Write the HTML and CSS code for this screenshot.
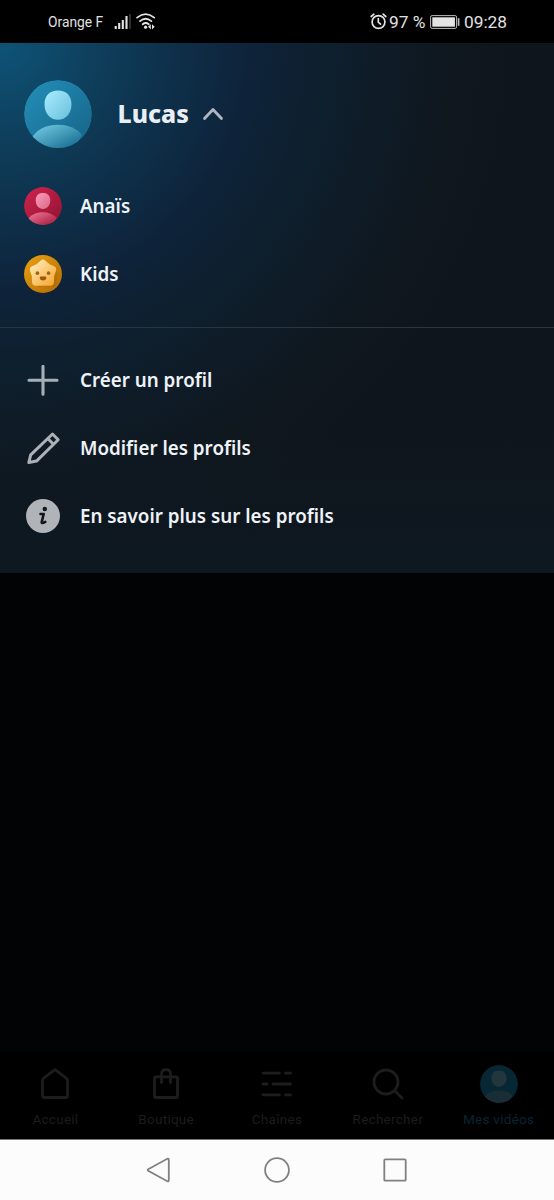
FILE: index.html
```html
<!DOCTYPE html>
<html lang="fr">
<head>
<meta charset="utf-8">
<title>Profils</title>
<link rel="stylesheet" href="styles.css">
</head>
<body>
<svg class="defs" width="0" height="0" aria-hidden="true">
  <defs>
    <linearGradient id="blueBg" x1="0" y1="0" x2="1" y2="1"><stop offset="0" stop-color="#2490ba"/><stop offset="1" stop-color="#166286"/></linearGradient>
    <linearGradient id="blueHead" x1="0" y1="0" x2="1" y2="1"><stop offset="0" stop-color="#a9edff"/><stop offset="1" stop-color="#68bfdb"/></linearGradient>
    <linearGradient id="blueBody" x1="0" y1="0" x2="1" y2="1"><stop offset="0.1" stop-color="#6fc8e2"/><stop offset="0.85" stop-color="#1c7195"/></linearGradient>
    <linearGradient id="redBg" x1="0" y1="0" x2="1" y2="1"><stop offset="0" stop-color="#d0234f"/><stop offset="1" stop-color="#8e1330"/></linearGradient>
    <linearGradient id="redHead" x1="0" y1="0" x2="1" y2="1"><stop offset="0" stop-color="#ff9dbb"/><stop offset="1" stop-color="#d86688"/></linearGradient>
    <linearGradient id="redBody" x1="0" y1="0" x2="1" y2="1"><stop offset="0.1" stop-color="#ee7193"/><stop offset="0.9" stop-color="#a51c3e"/></linearGradient>
    <linearGradient id="kidBg" x1="0" y1="0" x2="1" y2="1"><stop offset="0" stop-color="#eba10f"/><stop offset="1" stop-color="#b06a05"/></linearGradient>
    <linearGradient id="kidStar" gradientUnits="userSpaceOnUse" x1="14" y1="10" x2="54" y2="54"><stop offset="0.1" stop-color="#ffe6b0"/><stop offset="1" stop-color="#f7a62e"/></linearGradient>
    <clipPath id="disc"><circle cx="34" cy="34" r="34"/></clipPath>
  </defs>
</svg>
<div class="screen">
  <header class="status">
    <span class="carrier">Orange F</span>
    <svg class="signal" width="17" height="16" viewBox="0 0 17 16"><path d="M1.700 12v3M5.200 9v6M8.800 6v9M12.500 2v13" stroke="#e4e4e4" stroke-width="2.1"/><path d="M16 0v15" stroke="#333" stroke-width="1.8"/></svg>
    <svg class="wifi" width="20" height="17" viewBox="0 0 20 17" fill="none" stroke="#e4e4e4" stroke-width="1.8" stroke-linecap="round"><path d="M1.1 4.6Q9.6-2.3 18.2 4.6M4 8.1Q9.6 3.4 15.4 8.1M6.7 11.2Q9.7 8.8 12.7 11.2"/><circle cx="9.6" cy="14.2" r="1.6" fill="#e4e4e4" stroke="none"/><path d="M14.8 11.2v5.2l-2.7-2.6zM16 11.2v5.2l2.7-2.6z" fill="#e4e4e4" stroke="none"/></svg>
    <svg class="alarm" width="17" height="17" viewBox="0 0 17 17" fill="none" stroke="#e4e4e4" stroke-width="1.7" stroke-linecap="round"><circle cx="8.5" cy="9" r="6.4"/><path d="M8.3 5.7v3.5l2.2 2M1.2 3.5 3.9 1.2M13.1 1.2l2.7 2.3"/></svg>
    <span class="percent">97 %</span>
    <svg class="battery" width="30" height="14" viewBox="0 0 30 14"><rect x=".6" y=".6" width="26" height="12.8" rx="1.5" fill="none" stroke="#bbb"/><rect x="2.3" y="2.3" width="22.6" height="9.4" fill="#e4e4e4"/><path d="M28.6 3.2v7.6" stroke="#bbb" stroke-width="1.7"/></svg>
    <span class="clock">09:28</span>
  </header>

  <main class="panel">
    <div class="current">
      <svg class="avatar" viewBox="0 0 68 68"><g clip-path="url(#disc)"><circle cx="34" cy="34" r="34" fill="url(#blueBg)"/><path d="M34 10.500c8.200 0 13.500 5 13.500 13.700 0 9-5.800 15.600-13.500 15.600s-13.500-6.600-13.500-15.600c0-8.700 5.300-13.700 13.500-13.700z" fill="url(#blueHead)"/><path d="M5 62C12 49 22 44.700 34 44.700c9.500 0 18.500 3.300 23.800 10L50 70H12z" fill="url(#blueBody)"/></g></svg>
      <span class="current-name">Lucas</span>
      <svg class="chevron" width="22" height="14" viewBox="0 0 22 14"><path d="M2.500 11.500 11 2.500 19.500 11.500" fill="none" stroke="#b0b7c0" stroke-width="2.800" stroke-linecap="round" stroke-linejoin="round"/></svg>
    </div>
    <div class="row">
      <svg class="small-avatar" viewBox="0 0 68 68"><g clip-path="url(#disc)"><circle cx="34" cy="34" r="34" fill="url(#redBg)"/><path d="M34 10.700c8.200 0 13 4.800 13 12.700 0 9.500-5.500 16-13 16s-13-6.500-13-16c0-7.900 4.800-12.700 13-12.700z" fill="url(#redHead)"/><path d="M5 60C12 49 22 45 34 45c9.500 0 18.500 3.500 24.500 10L50 70H12z" fill="url(#redBody)"/></g></svg>
      <span>Anaïs</span>
    </div>
    <div class="row">
      <svg class="small-avatar" viewBox="0 0 68 68"><circle cx="34" cy="34" r="34" fill="url(#kidBg)"/><path d="M48 28 60 28 57 56 24 57z" fill="#a56404" opacity=".4"/><path d="M34 15 42 22 51 26 47.500 37 47 48.500 34 48 21 48.500 20.500 37 17 26 26 22z" fill="url(#kidStar)" stroke="url(#kidStar)" stroke-width="13" stroke-linejoin="round"/><circle cx="24" cy="32.500" r="3.200" fill="#9b651c"/><circle cx="44" cy="32.500" r="3.200" fill="#9b651c"/><path d="M30.500 38.500h7q2.500 0 2.500 2.500-1 4.500-6 4.500T28 41q0-2.500 2.500-2.500z" fill="#9b5710"/></svg>
      <span>Kids</span>
    </div>
    <div class="divider"></div>
    <div class="row">
      <svg class="row-icon" viewBox="0 0 38 38"><path d="M19 5.300v28M5 19.300h28" stroke="#a5afb6" stroke-width="3.100" stroke-linecap="round"/></svg>
      <span>Créer un profil</span>
    </div>
    <div class="row">
      <svg class="row-icon" viewBox="0 0 38 38" fill="none" stroke="#adb1b7" stroke-width="3" stroke-linejoin="round"><path d="M4.800 33.500 6.700 25.800 28.500 5 34.200 10.800 12.500 32.100zM23.800 9.500l5.600 5.700"/></svg>
      <span>Modifier les profils</span>
    </div>
    <div class="row">
      <svg class="row-icon" viewBox="0 0 38 38"><circle cx="19" cy="19" r="17" fill="#b0b3b8"/><circle cx="20.800" cy="12" r="2.200" fill="#10171e"/><path d="M16.500 17h3.200L17.700 25q-.4 2.100 3.600-.2" fill="none" stroke="#10171e" stroke-width="2.600" stroke-linecap="round" stroke-linejoin="round"/></svg>
      <span>En savoir plus sur les profils</span>
    </div>
  </main>

  <div class="backdrop"></div>

  <nav class="tabs">
    <div class="tab">
      <svg class="tab-icon" viewBox="0 0 38 38"><path d="M6.500 15.500Q6.500 14 7.700 13.200L19 4.700l11.300 8.500q1.200.8 1.200 2.300v15q0 2-2 2h-21q-2 0-2-2z"/></svg>
      <span>Accueil</span>
    </div>
    <div class="tab">
      <svg class="tab-icon" viewBox="0 0 38 38"><rect x="7.500" y="11.800" width="23" height="20.700" rx="1.500"/><path d="M14.500 17.500V9q0-4.300 4.500-4.300T23.500 9v8.500"/></svg>
      <span>Boutique</span>
    </div>
    <div class="tab">
      <svg class="tab-icon" viewBox="0 0 38 38"><path d="M5 8.200h16.500M27.500 8.200h5M5 19h4M15 19h17.500M5 29.800h16.500M27.500 29.800h5"/></svg>
      <span>Chaînes</span>
    </div>
    <div class="tab">
      <svg class="tab-icon" viewBox="0 0 38 38"><circle cx="17" cy="17" r="12"/><path d="m25.500 25.500 7.500 7.500"/></svg>
      <span>Rechercher</span>
    </div>
    <div class="tab tab-active">
      <svg class="tab-avatar" viewBox="0 0 68 68"><g clip-path="url(#disc)"><circle cx="34" cy="34" r="34" fill="#082735"/><path d="M34 10c8 0 13.600 5 13.600 13 0 10-6 16-13.600 16s-13.600-6-13.600-16c0-8 5.600-13 13.600-13z" fill="#23363d"/><path d="M5 62C12 49 22 45 34 45c9.500 0 18.500 3 23.800 10L50 70H12z" fill="#182d36"/></g></svg>
      <span>Mes vidéos</span>
    </div>
  </nav>

  <footer class="system">
    <svg class="sys-icon" viewBox="0 0 28 28"><path d="M3.200 13.200 22.300 2.800q1.500-.6 1.500 1v20.400q0 1.600-1.500 1L3.200 14.800q-1.100-.8 0-1.600z"/></svg>
    <svg class="sys-icon" viewBox="0 0 28 28"><circle cx="14" cy="14" r="11.900"/></svg>
    <svg class="sys-icon" viewBox="0 0 28 28"><rect x="3.300" y="3.300" width="21.400" height="21.400" rx="1"/></svg>
  </footer>
</div>
</body>
</html>
```
FILE: styles.css
```css
* { box-sizing: border-box; }
body { margin: 0; background: #000; }
svg { display: block; flex: none; }
.defs { position: absolute; }
.screen {
  width: 554px;
  height: 1200px;
  display: flex;
  flex-direction: column;
  font-family: Roboto, sans-serif;
  background: #000;
}
.status {
  height: 43px;
  display: flex;
  align-items: center;
  padding: 0 47px 0 48px;
  color: #e0e0e0;
  white-space: nowrap;
}
.carrier { font-size: 13.8px; width: 66px; margin-top: 1px; }
.signal { margin-top: 1px; }
.wifi { margin-left: 5px; }
.alarm { margin-left: auto; }
.percent { font-size: 17.3px; margin-left: 2px; width: 41px; margin-top: 1px; }
.battery { margin-top: 1px; }
.clock { font-size: 17.3px; margin-left: 4px; width: 43px; margin-top: 1px; }

.panel {
  height: 530px;
  padding-top: 37px;
  color: #eef3f8;
  font-family: "Noto Sans", sans-serif;
  background:
    linear-gradient(to bottom, transparent 380px, rgba(12, 27, 35, 0.5) 530px),
    radial-gradient(circle at 0 0, #0e5478 0, #0e3f5c 95px, #0e314c 165px, #0e233a 250px, #0e202f 315px, #0f171f 450px, #0f151d 520px, #0f151d 680px);
}
.current { display: flex; align-items: center; height: 68px; margin-bottom: 24px; padding-left: 24px; }
.avatar { width: 68px; height: 68px; }
.current-name { font-size: 24.8px; font-weight: 800; line-height: 34px; margin: -2px 0 0 25.5px; width: 84px; color: #e9eef5; }
.row {
  height: 68px;
  display: flex;
  align-items: center;
  gap: 18px;
  padding-left: 24px;
  font-size: 18.8px;
  font-weight: 600;
  line-height: 26px;
  white-space: nowrap;
}
.small-avatar { width: 38px; height: 38px; }
.row-icon { width: 38px; height: 38px; }
.divider { height: 1px; margin: 19px 0 18px; background: #29363f; }

.backdrop { flex: 1; background: #020305; }
.tabs {
  height: 87px;
  display: grid;
  grid-template-columns: repeat(5, 1fr);
  background: #000;
  padding-top: 13px;
}
.tab {
  display: flex;
  flex-direction: column;
  align-items: center;
  gap: 7px;
  font-size: 13.6px;
  line-height: 18px;
  letter-spacing: 0.22px;
  color: #1c1c1c;
}
.tab-active { color: #082534; }
.tab-icon, .tab-avatar { width: 38px; height: 38px; }
.tab-icon { fill: none; stroke: #1d1d1d; stroke-width: 2.8; stroke-linecap: round; stroke-linejoin: round; }
.system {
  height: 61px;
  display: flex;
  justify-content: center;
  align-items: center;
  gap: 90px;
  background: #fcfcfc;
  border-top: 1px solid #777;
}
.sys-icon { width: 28px; height: 28px; fill: none; stroke: #808080; stroke-width: 1.8; }
```
